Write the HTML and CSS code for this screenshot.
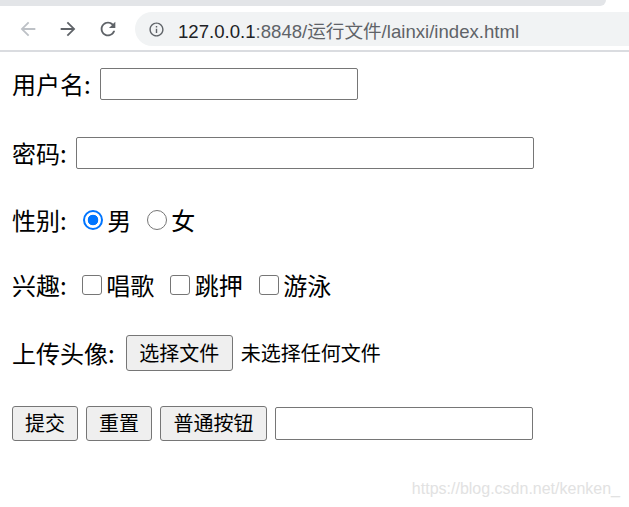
FILE: index.html
```html
<!DOCTYPE html>
<html lang="zh-CN">
<head>
<meta charset="utf-8">
<title>index</title>
<link rel="stylesheet" href="styles.css">
</head>
<body>
<header class="browser">
  <div class="tabstrip"><div class="tabs"></div></div>
  <div class="toolbar">
    <span class="nav nav-off">
      <svg viewBox="0 0 24 24" width="22" height="22"><path d="M20 11H7.83l5.59-5.59L12 4l-8 8 8 8 1.41-1.41L7.83 13H20v-2z"/></svg>
    </span>
    <span class="nav">
      <svg viewBox="0 0 24 24" width="22" height="22"><path d="M4 11h12.17l-5.59-5.59L12 4l8 8-8 8-1.41-1.41L16.17 13H4v-2z"/></svg>
    </span>
    <span class="nav">
      <svg viewBox="0 0 24 24" width="22" height="22"><path d="M17.65 6.35C16.2 4.9 14.21 4 12 4c-4.42 0-7.99 3.58-7.99 8s3.57 8 7.99 8c3.73 0 6.84-2.55 7.73-6h-2.08c-.82 2.33-3.04 4-5.65 4-3.31 0-6-2.69-6-6s2.69-6 6-6c1.66 0 3.14.69 4.22 1.78L13 11h7V4l-2.35 2.35z"/></svg>
    </span>
    <div class="omnibox">
      <svg class="info" viewBox="0 0 24 24" width="17" height="17"><path d="M11 7h2v2h-2zm0 4h2v6h-2zm1-9C6.48 2 2 6.48 2 12s4.48 10 10 10 10-4.48 10-10S17.52 2 12 2zm0 18c-4.41 0-8-3.59-8-8s3.59-8 8-8 8 3.59 8 8-3.59 8-8 8z"/></svg>
      <span class="url"><span class="host">127.0.0.1</span>:8848/运行文件/lainxi/index.html</span>
    </div>
  </div>
</header>

<main class="page">
  <form class="form">
    <div class="row row-tall">
      <label class="label">用户名:</label>
      <input class="text text-user" type="text">
    </div>
    <div class="row row-tall">
      <label class="label">密码:</label>
      <input class="text text-pass" type="password">
    </div>
    <div class="row row-short">
      <span class="label">性别:</span>
      <input class="radio radio-first" type="radio" name="sex" checked>
      <span class="opt">男</span>
      <input class="radio" type="radio" name="sex">
      <span class="opt">女</span>
    </div>
    <div class="row row-short">
      <span class="label">兴趣:</span>
      <input class="check check-first" type="checkbox">
      <span class="opt">唱歌</span>
      <input class="check" type="checkbox">
      <span class="opt">跳押</span>
      <input class="check" type="checkbox">
      <span class="opt">游泳</span>
    </div>
    <div class="row row-tall row-upload">
      <span class="label">上传头像:</span>
      <button class="btn btn-file" type="button">选择文件</button>
      <span class="file-none">未选择任何文件</span>
    </div>
    <div class="row row-tall row-buttons">
      <button class="btn btn-short" type="submit">提交</button>
      <button class="btn btn-short" type="reset">重置</button>
      <button class="btn btn-long" type="button">普通按钮</button>
      <input class="text text-user text-last" type="text">
    </div>
  </form>
</main>

<div class="watermark">https://blog.csdn.net/kenken_</div>
</body>
</html>
```

FILE: styles.css
```css
html, body {
  margin: 0;
  padding: 0;
}

body {
  width: 629px;
  height: 507px;
  overflow: hidden;
  position: relative;
  background: #ffffff;
  color: #000000;
  font-family: "Noto Sans CJK SC", "Liberation Sans", sans-serif;
}

/* ---------- browser chrome ---------- */
.tabstrip {
  height: 6px;
  background: #ffffff;
}

.tabs {
  width: 606px;
  height: 6px;
  background: #e3e5e8;
  border-bottom-right-radius: 6px;
}

.toolbar {
  box-sizing: border-box;
  height: 46px;
  padding: 6px 0 0 8px;
  display: flex;
  align-items: flex-start;
  background: #ffffff;
  border-bottom: 2px solid #dadce0;
}

.nav {
  width: 40px;
  height: 34px;
  display: flex;
  align-items: center;
  justify-content: center;
}

.nav svg {
  fill: #5f6368;
  display: block;
}

.nav-off svg {
  fill: #bdc1c6;
}

.omnibox {
  flex: 1;
  margin-left: 7px;
  height: 34px;
  border-radius: 17px 0 0 17px;
  background: #f1f3f4;
  display: flex;
  align-items: center;
  padding-left: 13px;
}

.info {
  fill: #5f6368;
  margin-right: 13px;
  flex: none;
}

.url {
  font-family: "Liberation Sans", "Noto Sans CJK SC", sans-serif;
  font-size: 18.6px;
  color: #5f6368;
  white-space: nowrap;
}

.host {
  color: #202124;
}

/* ---------- page ---------- */
.form {
  display: flex;
  flex-direction: column;
  gap: 35px;
  padding: 15px 0 0 12px;
  margin: 0;
}

.row {
  display: flex;
  align-items: center;
}

.row-tall {
  height: 34px;
}

.row-short {
  height: 30px;
}

.row-upload {
  margin-top: 1px;
}

.label {
  font-size: 24px;
  line-height: 32px;
  margin-right: 9.5px;
  white-space: nowrap;
}

.opt {
  font-size: 24px;
  line-height: 32px;
}

.text {
  box-sizing: border-box;
  height: 32px;
  margin: 0;
  padding: 0 3px;
  border: 1px solid #767676;
  border-radius: 2px;
  background: #ffffff;
  font-size: 20px;
  outline: none;
}

.text-user {
  width: 258px;
}

.text-pass {
  width: 458px;
}

.text-last {
  height: 33px;
  margin-top: 1px;
}

.radio {
  appearance: none;
  -webkit-appearance: none;
  box-sizing: border-box;
  width: 20px;
  height: 20px;
  margin: 0 4px 0 16px;
  border: 1.5px solid #767676;
  border-radius: 50%;
  background: #ffffff;
}

.radio:checked {
  border: 2px solid #0075ff;
  background: radial-gradient(circle, #0075ff 0 5px, #ffffff 5.6px);
}

.radio-first {
  margin-left: 7px;
}

.check {
  appearance: none;
  -webkit-appearance: none;
  box-sizing: border-box;
  width: 20px;
  height: 20px;
  margin: 0 4.5px 0 16px;
  border: 1.5px solid #767676;
  border-radius: 3px;
  background: #ffffff;
}

.check-first {
  margin-left: 5.5px;
}

.btn {
  box-sizing: border-box;
  height: 35px;
  margin: 0;
  padding: 0 12px;
  border: 1px solid #767676;
  border-radius: 3px;
  background: #efefef;
  color: #000000;
  font-family: "Noto Sans CJK SC", sans-serif;
  font-size: 20px;
  line-height: 26px;
  white-space: nowrap;
}

.btn-short {
  width: 66px;
}

.btn-long,
.btn-file {
  width: 107px;
}

.btn-file {
  margin-left: 1.5px;
  height: 36px;
}

.file-none {
  margin-left: 8px;
  font-size: 20px;
  line-height: 28px;
}

.row-buttons {
  gap: 8px;
  margin-top: 1px;
}

/* ---------- watermark overlay ---------- */
.watermark {
  position: absolute;
  right: 9px;
  bottom: 8px;
  font-family: "Liberation Sans", sans-serif;
  font-size: 16px;
  line-height: 20px;
  color: #e2e2e2;
  white-space: nowrap;
}
```
